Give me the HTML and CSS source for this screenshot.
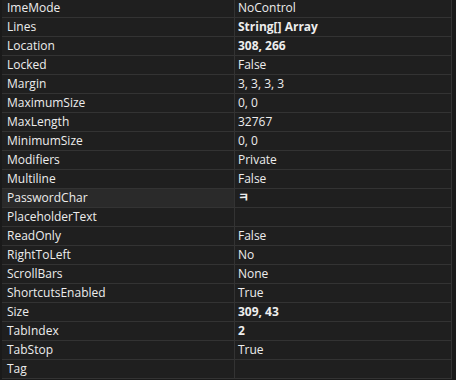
FILE: index.html
```html
<!DOCTYPE html>
<html>
<head>
<meta charset="utf-8">
<link rel="stylesheet" href="styles.css">
</head>
<body>
<div class="grid">
  <div class="row"><div class="name">ImeMode</div><div class="value">NoControl</div></div>
  <div class="row"><div class="name">Lines</div><div class="value bold">String[] Array</div></div>
  <div class="row"><div class="name">Location</div><div class="value bold">308, 266</div></div>
  <div class="row"><div class="name">Locked</div><div class="value">False</div></div>
  <div class="row"><div class="name">Margin</div><div class="value">3, 3, 3, 3</div></div>
  <div class="row"><div class="name">MaximumSize</div><div class="value">0, 0</div></div>
  <div class="row"><div class="name">MaxLength</div><div class="value">32767</div></div>
  <div class="row"><div class="name">MinimumSize</div><div class="value">0, 0</div></div>
  <div class="row"><div class="name">Modifiers</div><div class="value">Private</div></div>
  <div class="row"><div class="name">Multiline</div><div class="value">False</div></div>
  <div class="row selected"><div class="name">PasswordChar</div><div class="value bold">ㅋ</div></div>
  <div class="row"><div class="name">PlaceholderText</div><div class="value"></div></div>
  <div class="row"><div class="name">ReadOnly</div><div class="value">False</div></div>
  <div class="row"><div class="name">RightToLeft</div><div class="value">No</div></div>
  <div class="row"><div class="name">ScrollBars</div><div class="value">None</div></div>
  <div class="row"><div class="name">ShortcutsEnabled</div><div class="value">True</div></div>
  <div class="row"><div class="name">Size</div><div class="value bold">309, 43</div></div>
  <div class="row"><div class="name">TabIndex</div><div class="value bold">2</div></div>
  <div class="row"><div class="name">TabStop</div><div class="value">True</div></div>
  <div class="row"><div class="name">Tag</div><div class="value"></div></div>
</div>
</body>
</html>
```

FILE: styles.css
```css
html, body {
  margin: 0;
  padding: 0;
  background: #1a1a1a;
  height: 100%;
  overflow: hidden;
}
.grid {
  margin: -1px 4px 0 2px;
  background: #1f1f1f;
  border-right: 1px solid #333333;
  font-family: "Open Sans", "Noto Sans CJK KR", sans-serif;
  font-size: 12px;
  color: #ededed;
}
.row {
  display: grid;
  grid-template-columns: 233px 1fr;
  height: 18px;
  border-bottom: 1px solid #333333;
}
.name {
  padding-left: 5px;
  line-height: 18px;
  white-space: nowrap;
  border-right: 1px solid #333333;
}
.value {
  padding-left: 3px;
  line-height: 18px;
  white-space: nowrap;
}
.bold {
  font-weight: bold;
}
.selected .name {
  background: #2a2a2a;
}
```
